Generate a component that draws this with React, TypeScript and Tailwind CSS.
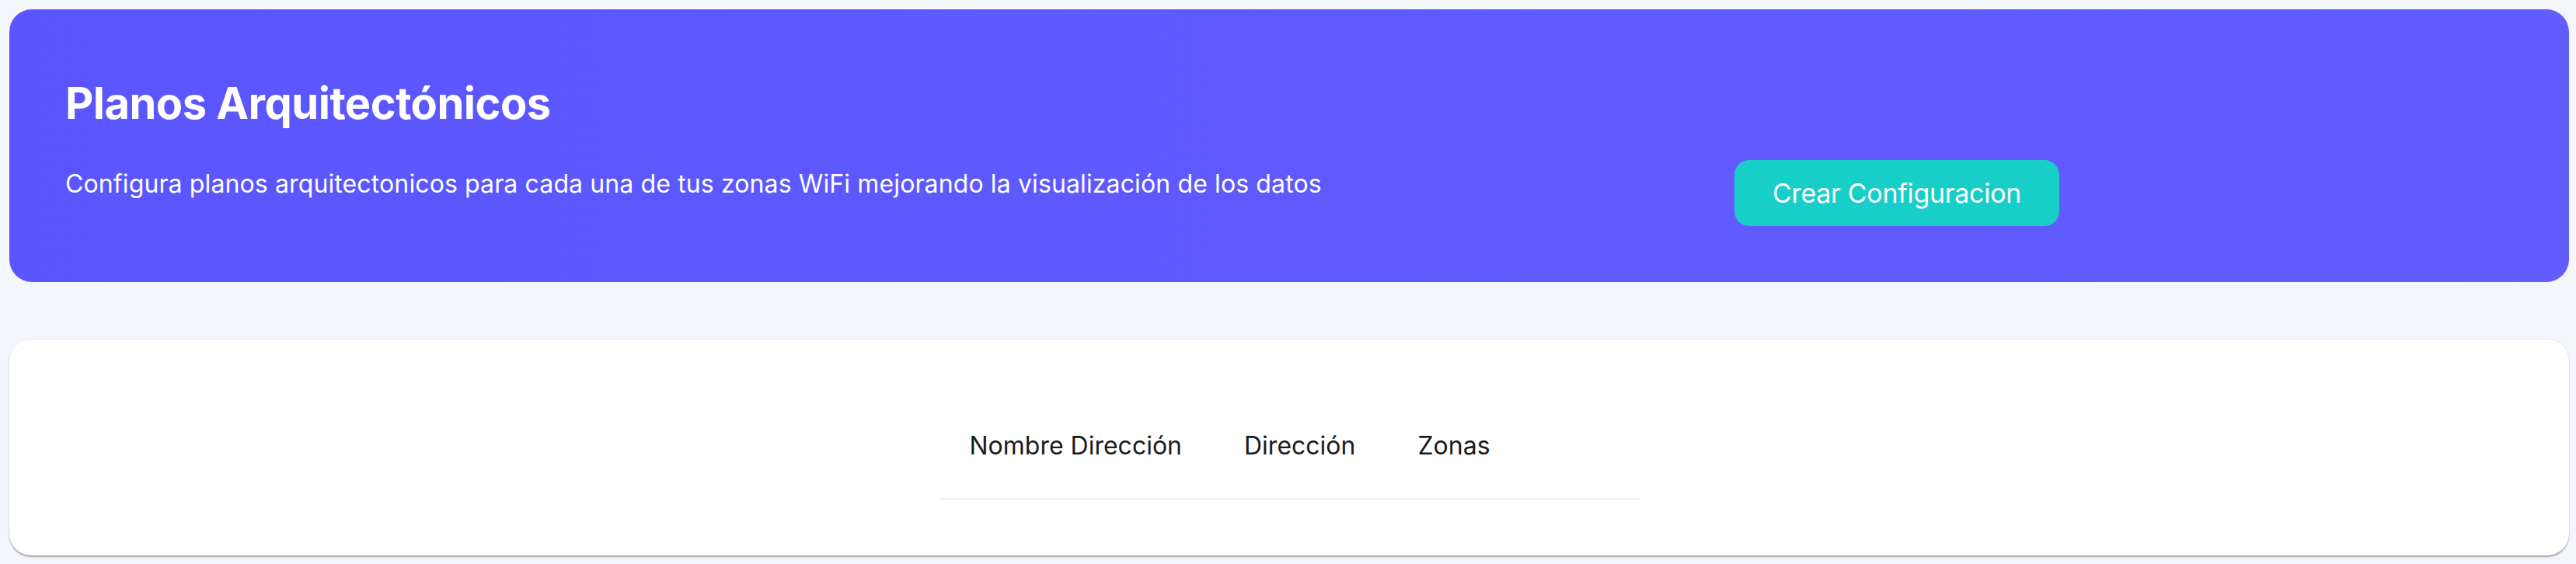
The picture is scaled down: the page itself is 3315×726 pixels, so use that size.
import React from "react";

export default function App() {
  return (
    <div className="min-h-[726px] w-full bg-[#f3f6fb] pl-3 pr-[9px] pt-3 font-['Inter',_'Noto_Sans',_sans-serif]">
      <section className="flex h-[351px] rounded-[29px] bg-gradient-to-r from-[#5b55ff] to-[#635dff] pl-[72px] pt-[93px]">
        <div className="w-[2148px] shrink-0">
          <h1 className="text-[56px] font-bold leading-none tracking-[-0.5px] text-white">
            Planos Arquitectónicos
          </h1>
          <p className="mt-[60px] text-[32px] leading-none tracking-[0.12px] text-white whitespace-nowrap">
            Configura planos arquitectonicos para cada una de tus zonas WiFi mejorando la visualización de los datos
          </p>
        </div>
        <button className="mt-[101px] flex h-[85px] w-[418px] items-center justify-center self-start rounded-[19px] bg-[#18cec9] text-[34px] leading-none tracking-[-0.3px] text-white">
          Crear Configuracion
        </button>
      </section>

      <section className="mt-[73px] flex h-[279px] justify-center rounded-[28px] border-t border-[#e4e8ee] bg-white pt-[81px] shadow-[0_2px_2px_rgba(0,0,0,0.35)]">
        <table className="h-fit w-[903px] border-collapse">
          <thead>
            <tr className="border-b-2 border-[#efefef]">
              <th className="px-[40px] pb-[51px] pt-[40px] text-left text-[32px] font-normal leading-none tracking-[0px] text-[#1b1b1b] whitespace-nowrap">
                Nombre Dirección
              </th>
              <th className="px-[40px] pb-[51px] pt-[40px] text-left text-[32px] font-normal leading-none tracking-[0px] text-[#1b1b1b] whitespace-nowrap">
                Dirección
              </th>
              <th className="px-[40px] pb-[51px] pt-[40px] text-left text-[32px] font-normal leading-none tracking-[0px] text-[#1b1b1b] whitespace-nowrap">
                Zonas
              </th>
              <th className="w-full"></th>
            </tr>
          </thead>
        </table>
      </section>
    </div>
  );
}
